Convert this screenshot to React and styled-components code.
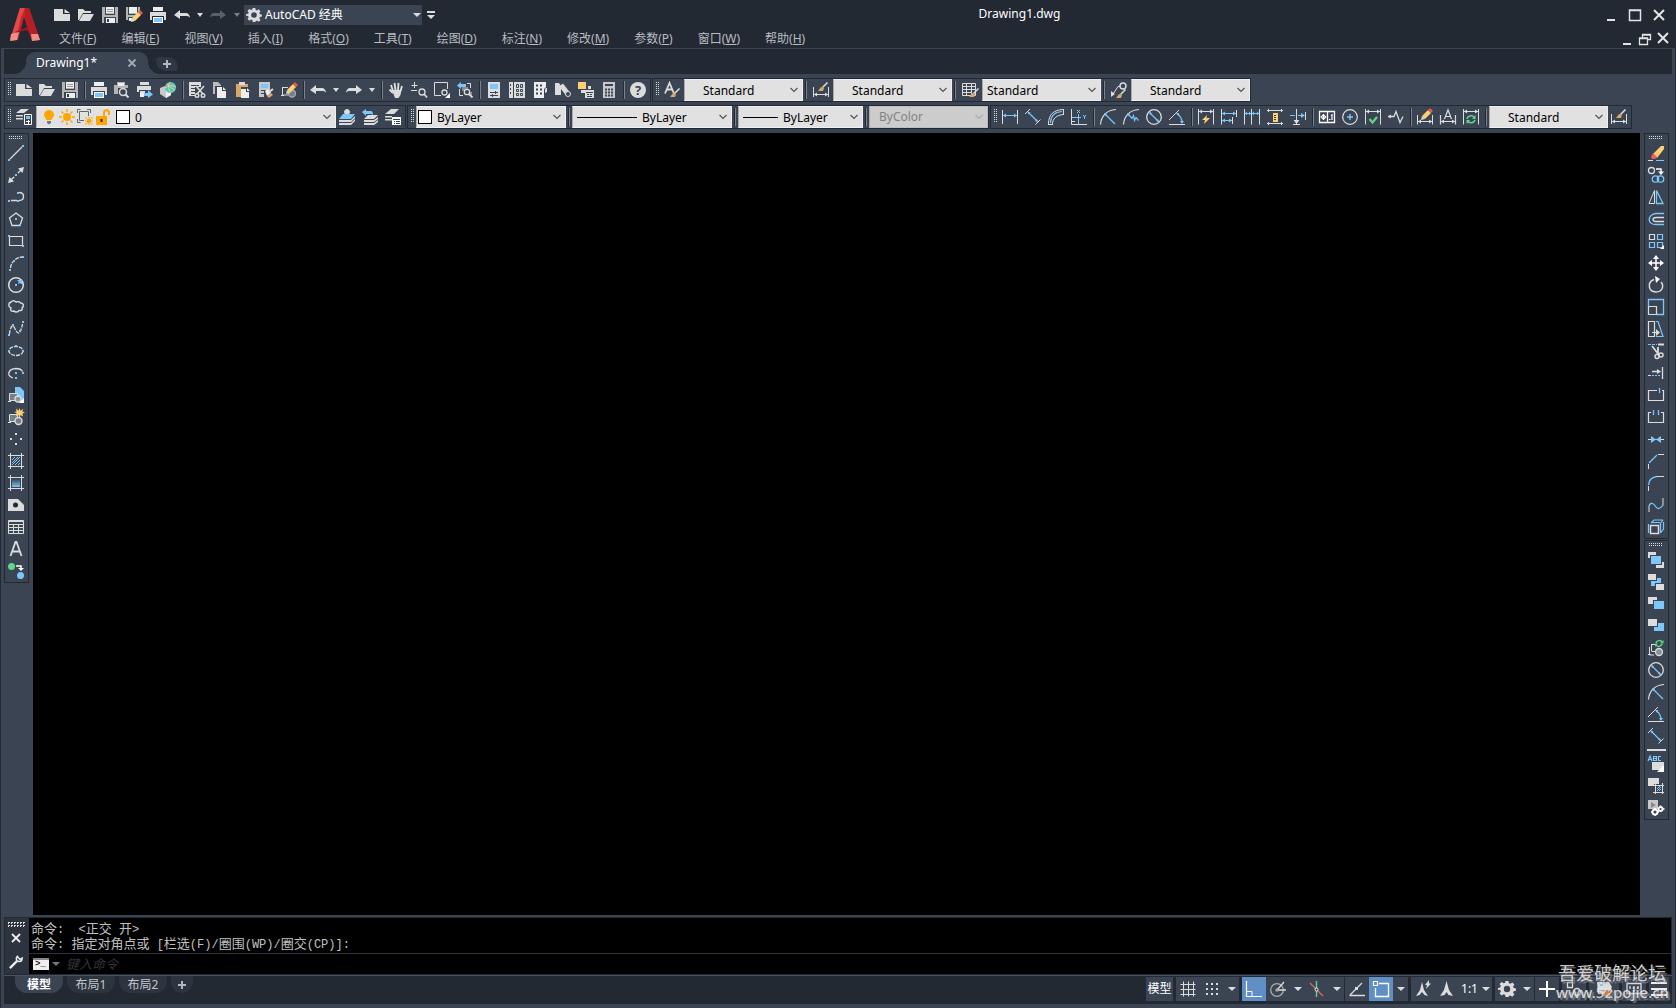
import React from "react";
import styled, { createGlobalStyle, css } from "styled-components";

const DARK = "#222933";
const MID = "#3b4453";
const W = "#dcdcdc";
const B = "#7cc6fb";
const G = "#5fd68a";
const Y = "#ffcf70";
const O = "#ffa500";

const Global = createGlobalStyle`
  * { box-sizing: border-box; }
  body { margin: 0; background: ${DARK}; }
  button, input, select { font: inherit; color: inherit; margin: 0; }
  body { font: 12px/16px "Noto Sans", "Noto Sans CJK SC", sans-serif; color: #fff; }
`;

/* ---------- drawing helpers ---------- */
const S = ({ d, c = W, w = 1, dash }) => (
  <path d={d} fill="none" stroke={c} strokeWidth={w} strokeDasharray={dash} />
);
const F = ({ d, c = W }) => <path d={d} fill={c} fillRule="evenodd" />;
const C = ({ x, y, r, c = W, f = "none", w = 1 }) => (
  <circle cx={x} cy={y} r={r} stroke={c} fill={f} strokeWidth={w} />
);
const Pencil = () => (
  <>
    <F d="M6 11l6-6 3 3-6 6z" c={Y} />
    <F d="M6 11l3 3-4 1z" />
    <F d="M12 5l2-2 3 3-2 2z" c="#e8594f" />
  </>
);
const Brush = ({ x = 0, y = 0 }) => (
  <g transform={`translate(${x} ${y})`}>
    <S d="M15.500 3.500l-5 5" w={1.6} />
    <F d="M6 12l3-4 3 1-1 3z" c="#d9a866" />
  </g>
);

const ICONS = {
  fresh: <><F d="M0 2h9v5h7v7H0z" /><F d="M10.500 2l5.500 4h-5.500z" /></>,
  open: <><F d="M0 2h5l2 2h6v2H5l-4 7H0z" /><F d="M5 7h11l-4 7H1z" /></>,
  save: <><F d="M0 0h16v16H0z" c="#b4b4b4" /><F d="M3 0h10v6H3z" c="#eee" /><F d="M3 0h1v7h8V0h1v8H3zM2 10h12v6H2z" c={MID} /><F d="M5 2h6v1H5zM5 4h6v1H5z" c="#999" /><F d="M4 11h9v5H4z" c="#eee" /><F d="M5 12h2v3H5z" c={MID} /></>,
  saveas: <><F d="M0 0h14v6L8 13H0z" c="#b4b4b4" /><F d="M3 0h8v6H3z" c="#eee" /><F d="M2 0h1v7h8V0h1v8H2zM2 10h5v4H2z" c={MID} /><F d="M3 11h3v3H3z" c="#eee" /><Pencil /></>,
  print: <><F d="M3 0h10v4H3z" c="#eee" /><F d="M0 5h16v8h-2V9H2v4H0z" /><F d="M3 10h10v6H3z" c="#fff" /><F d="M4 11h8v4H4z" c={B} /></>,
  preview: <><F d="M0 5V3h3V0h8v3h3v3H4v6H0z" c="#b4b4b4" /><F d="M4 1h6v3H4z" c="#eee" /><C x={9} y={10} r={3.500} w={1.500} f={MID} /><S d="M11.500 12.500l3 3" w={2} /></>,
  publish: <><F d="M3 0h9v3H3zM0 4h14v4H2v2H0zM3 9h5v2H3z" /><F d="M3 11h4v4H3z" c="#eee" /><F d="M7 11h4V8l5 4.500-5 3.500v-2H7z" c={B} /></>,
  globe: <><F d="M0 6l5-2 6 3v6l-5 3-6-4z" c="#c8c8c8" /><F d="M6 9l5-2v6l-5 3z" c="#f0f0f0" /><circle cx="10.500" cy="5.500" r="5.500" fill="#53c7c9" /><S d="M5 6c4-3 7-3 11-1M10 0c-3 4-1 8 1 11M7 2c3 3 6 5 8 6" c={Y} /></>,
  cut: <><F d="M0 0h12v5H0z" /><F d="M0 5h6v9H0z" /><S d="M2 3.500h8M2 6.500h5M2 9.500h4M2 12.500h4" c={MID} /><S d="M7 4l7 8M15 4l-7 8" w={1.600} /><C x={8} y={13.500} r={1.800} w={1.400} /><C x={14} y={13.500} r={1.800} w={1.400} /></>,
  copy: <><F d="M1 0h5l3 3v1H3v8H1z" c="#bcbcbc" /><F d="M5 5h5v4h4v7H5z" c="#eee" /><F d="M11 5l3 3h-3z" c="#eee" /></>,
  paste: <><F d="M1 2h12v3H6v10H1z" c="#d9a866" /><F d="M4 0h6v3H4z" /><F d="M6 7h5v3h3v6H6z" c="#eee" /><F d="M12 6l3 3h-3z" c="#eee" /></>,
  match: <><F d="M1 0h11v9H6v6H1z" c="#c8c8c8" /><F d="M3 2h7v4H3z" c={B} /><S d="M3 8.500h5M3 11.500h3" c={MID} /><F d="M7 9l3-2 3 4-4 3z" c="#eee" /><F d="M9 14l4-3 2 2-4 3z" c="#d9a866" /><S d="M11 10l4-3" w={2} /></>,
  blockedit: <><S d="M1.500 5v8h6M1 5.500h6M0 13.500h3" /><C x={11} y={11.500} r={3.500} c="#aaa" w={1.300} f="#777f8b" /><g transform="translate(0 -3)"><Pencil /></g></>,
  undo: <F d="M0 8l6-5v3h6c2 0 4 2 4 5-1-2-3-2-4-2H6v3z" />,
  redo: <F d="M16 8l-6-5v3H4c-2 0-4 2-4 5 1-2 3-2 4-2h6v3z" />,
  redoOff: <F d="M16 8l-6-5v3H4c-2 0-4 2-4 5 1-2 3-2 4-2h6v3z" c="#59606b" />,
  pan: <><S d="M5 9L3 3M7.500 8L6.500 1M10 8l.5-7M12.500 9L14 4M5 11L1.500 7.500" w={1.900} /><F d="M4 8h9.500l-1 5-2 3H7z" /></>,
  zoomrt: <><S d="M3.500 0v6M.5 3.500h6M0 8.500h6" /><C x={11} y={10} r={3} w={1.300} /><S d="M13 12l3 3.500" w={1.800} /></>,
  zoomwin: <><S d="M7 13.500H.5v-13h13V7" /><C x={10.500} y={10.500} r={2.500} w={1.300} /><F d="M16 11v5h-5z" c="#fff" /></>,
  zoomprev: <><S d="M2.500 7v6.500H6M10 1.500h3.500V6M14 10v3" /><F d="M5 5h6v4H5z" c="#888" /><F d="M0 3.500L4 0v2h5v3H4v2z" c={B} /><C x={10} y={10} r={2.700} w={1.300} f={MID} /><S d="M12 12l3.500 3.500" w={1.800} /></>,
  props: <><F d="M2 0h12v16H2z" /><F d="M4 2h8v5H4z" c={B} /><S d="M4 10.500h8M4 13.500h8M9.500 9v3M6.500 12v3" c={MID} /></>,
  dcenter: <><F d="M0 0h4v16H0zM5 0h11v16H5z" /><S d="M1.500 2v2M1.500 6v2M1.500 10v2M7.500 2.500h2v3h-2zM11.500 2.500h2v3h-2zM7.500 7.500h2v2h-2zM11.500 7.500h2v2h-2zM7.500 11.500h2v2h-2zM11.500 11.500h2v2h-2z" c={MID} /></>,
  palettes: <><F d="M2 0h12v5l-2 2v9H2z" c="#eee" /><S d="M4 3.500h2M8 3.500h2M4 7.500h2M8 7.500h2M4 11.500h2M8 11.500h2" c={MID} w={2} /><F d="M14 6h1v4l-2 1V7z" /></>,
  sheet: <><F d="M0 1h4l2 3v9H0z" /><S d="M6 3l7 9" w={5} /><C x={13} y={12} r={2.500} f={MID} /></>,
  markup: <><F d="M0 0h8v7H0z" c={Y} /><F d="M10 4h3v3h-3zM3 8h4v3H3zM7 8h9v8H7z" /><S d="M8 10.500h7M9 12.500h2M12 12.500h2M9 14.500h5" c={MID} /></>,
  calc: <><F d="M2 0h12v16H2z" c="#c8c8c8" /><F d="M4 2h8v2H4z" c={MID} /><S d="M4 7.500h2M7 7.500h2M10 7.500h2M4 10.500h2M7 10.500h2M10 10.500h2M4 13.500h2M7 13.500h2M10 13.500h2" c={MID} w={2} /></>,
  textstyle: <><S d="M1 11.500L5.500 1 10 11.500M2.500 7.500h6" w={1.800} /><Brush y={3} /></>,
  dimstyle: <><S d="M.5 5v10M15.500 5v10M1 12.500h14" /><F d="M1 12.500l3-2v4zM15 12.500l-3-2v4z" /><Brush x={-1} y={-3} /></>,
  tablestyle: <><S d="M.5 1.500h13v12H.5zM0 4.500h14M0 7.500h14M0 10.500h10M4.500 2v12M9.500 2v10" /><Brush x={1} y={3} /></>,
  mlstyle: <><S d="M1.500 13L7 4.500h2" /><F d="M0 15V9l4 3z" /><C x={12} y={4} r={3} w={1.400} /><Brush x={-1} y={4} /></>,
  layers: <><F d="M5 0h8L8 4H0zM0 6h7v1.500H0zM0 9h7v1.500H0z" /><S d="M8.500 5.500h7v10h-7z" c="#fff" /><F d="M10 7h4v3h-4z" c={B} /><S d="M10 12.500h4M12.500 11v4" c="#fff" /></>,
  laycur: <><C x={8} y={3} r={2.500} f={W} /><F d="M4 5h12l-4 5H0z" c={B} /><F d="M0 11h12l4-4v2l-4 4H0zM0 14h12l4-4v2l-4 4H0z" /></>,
  layprev: <><F d="M6 6h10l-4 4H2zM2 11h10l4-3v2l-4 3H2zM2 14h10l4-3v2l-4 3H2z" /><F d="M0 3l4-3v2h4c3 0 3 2 3 4-1-1-2-1-3-1H4v2z" c={B} /></>,
  laystate: <><F d="M6 0h8L9 5H0zM0 7h7v1.500H0zM0 10h7v1.500H0z" /><F d="M7 8h9v8H7z" c="#fff" /><S d="M8 10.500h7M9 12.500h1M11 12.500h4M9 14.500h1M11 14.500h4" c={MID} /></>,
  dlinear: <><S d="M.5 1v14M15.500 1v14" /><S d="M1 6.500h14" c={B} /><F d="M1 6.500l3-2v4zM15 6.500l-3-2v4z" c={B} /></>,
  daligned: <><S d="M0 5l5-5M10.500 15.500l5-5" /><S d="M3 3l9.500 9.500" c={B} w={1.200} /><F d="M2.500 2.500l3 1-2 2zM13 13l-3-1 2-2z" c={B} /></>,
  darc: <><S d="M0 15.500h5M15.500 0v6" /><S d="M2.500 14C2.500 7 7 3 14 2.500" c={B} w={1.200} /><S d="M4.500 15c0-5 4-9 11-9.500M.5 15C.5 5 6 1 15 .5" /></>,
  dord: <><S d="M.5 0v15.500h15.500M0 12.500h4" /><S d="M6 1l3 3M9 1L6 4M1 8.500h9M7.500 5v10M12 6l1.500 2L15 6M13.500 8v2" c={B} /></>,
  dradius: <><S d="M.5 15.500C1 8 6 1 16 .5" w={1.200} /><S d="M5 5l10 10" c={B} w={1.300} /><F d="M4 4l3 1-2 2z" c={B} /></>,
  djog: <><S d="M.5 15.500C1 8 6 1 16 .5" w={1.200} /><S d="M5 5l4 4.500 1.500-3 1 5 1.500-3 2.500 3" c={B} w={1.200} /><F d="M4 4l3 1-2 2z" c={B} /></>,
  ddia: <><C x={8} y={8} r={7.300} w={1.300} /><S d="M3.500 3.500l9 9" c={B} w={1.300} /><F d="M3 3l3 1-2 2zM13 13l-3-1 2-2z" c={B} /></>,
  dang: <><S d="M0 15.500h16M0 11L10 1" /><S d="M8 5c4 2 5 6 5 9" c={B} w={1.300} /><F d="M7 4h3v3zM13 15l-2-3h4z" c={B} /></>,
  dquick: <><S d="M.5 0v15.500M15.500 0v15.500M1 2.500h14" /><F d="M1 2.500l3-2v4zM15 2.500l-3-2v4z" /><F d="M9 6L4 11h3l-1 4 6-6H8.500z" c={Y} /></>,
  dbase: <><S d="M.5 0v15.500M11.500 8v7M15.500 1v7" /><S d="M1 4.500h14M1 11.500h10" c={B} /><F d="M1 4.500l3-2v4zM15 4.500l-3-2v4zM1 11.500l3-2v4zM11 11.500l-3-2v4z" c={B} /></>,
  dcont: <><S d="M.5 0v15.500M7.500 0v15.500M15.500 0v15.500" /><S d="M1 4.500h6M8 4.500h7" c={B} /><F d="M1 4.500l2-2v4zM7 4.500l-2-2v4zM8 4.500l2-2v4zM15 4.500l-2-2v4z" c={B} /></>,
  dspace: <><S d="M0 1.500h16M0 14.500h16M1.500 0v3M14.500 0v3M1.500 13v3M14.500 13v3" /><F d="M6 4h5v9H6z" c={Y} /><S d="M7 6.500h2M7 8.500h2M7 10.500h2" c={MID} /></>,
  dbreak: <><S d="M6.500 0v15M3 15.500h7M15.500 3v8" /><S d="M0 6.500h5M8 6.500h6" c={B} w={1.200} /><F d="M6.500 15l-3-4h6z" /><F d="M11 4l4 2.500L11 9z" c={B} /></>,
  tol: <><S d="M.5 2.500h15v11H.5zM8.500 2v12" w={1.300} c="#fff" /><C x={4.500} y={8} r={2} c="#fff" /><S d="M1.500 8h6M4.500 5v6M13 5v6M12 6.500l1-1M10 10.500h1.500" c="#fff" w={1.200} /></>,
  cmark: <><C x={8} y={8} r={7.300} w={1.200} /><S d="M8 5v6M5 8h6" c={B} w={1.400} /></>,
  inspect: <><S d="M.5 0v15.500M15.500 0v15.500M1 2.500h14" /><F d="M1 2.500l3-2v4zM15 2.500l-3-2v4z" /><S d="M4.500 10l3 3.500L12 8" c={G} w={2.200} /></>,
  jogline: <><S d="M0 7.500h6l2-5 4 11 3-6" w={1.300} /><F d="M0 7.500l3-2v4z" /></>,
  dimedit: <><S d="M.5 6v9.500M15.500 6v9.500M1 12.500h14" /><F d="M1 12.500l3-2v4zM15 12.500l-3-2v4z" /><g transform="translate(-1 -4)"><Pencil /></g></>,
  dimtedit: <><S d="M.5 6v9.500M15.500 6v9.500M1 12.500h14M4.500 10L8 1l3.500 9M5.500 7.500h5" w={1.200} /><F d="M1 12.500l3-2v4zM15 12.500l-3-2v4z" /></>,
  dimup: <><S d="M.5 0v15.500M15.500 0v15.500M1 2.500h14" /><F d="M1 2.500l3-2v4zM15 2.500l-3-2v4z" /><S d="M4 10c1-4 6-4 7-1.500M12 11c-1 3.500-6 3.500-7.500 1" c={G} w={1.500} /><F d="M12.500 6v4H9zM3.500 15v-4H7z" c={G} /></>,
  line: <><S d="M2 14L14 2" w={1.200} /><F d="M0 14h2v2H0zM14 0h2v2h-2z" c={B} /></>,
  xline: <><S d="M2 14L14 2" w={1.300} /><F d="M0 16l1.500-6L6 14.500zM16 0l-1.500 6L10 1.500z" /><F d="M6 6h4v4H6z" c={MID} /><F d="M7 7h2v2H7z" c={B} /></>,
  pline: <><S d="M3 11.500h6M11 3.500c6 0 6 8 0 8" w={1.300} /><F d="M0 11h2v2H0zM9 11h2v2H9zM9 3h2v2H9z" c={B} /></>,
  polygon: <><S d="M8 2l6.500 5-2.500 7.500H4L1.500 7z" w={1.300} /><F d="M7 7h2v2H7zM11 13h2v2h-2z" c={B} /></>,
  rect: <><S d="M1.500 3.500h13v9h-13z" w={1.200} /><F d="M0 2h2v2H0zM14 12h2v2h-2z" c={B} /></>,
  arc: <><S d="M2.500 13C3 7 8 2.500 14 2" w={1.300} dash="4 1" /><F d="M1 14h2v2H1zM5 5h2v2H5zM14 1h2v2h-2z" c={B} /></>,
  circle: <><C x={8} y={8} r={7.300} w={1.500} /><F d="M7 7h2v2H7zM9 3h5v4h-1l-1-1-2 1V6l1-1z" c={B} /></>,
  cloud: <path d="M3 3c2-2 4-1 5 0 2-1 4 0 4.500 1 3 0 4 3 1.500 5 1 2-1 3-3 2.500-1 2-4 2-5 .5-3 1-4-1-3-3C0 8 0 4 3 3z" fill="none" stroke={W} strokeWidth="1.400" />,
  spline: <><S d="M1.500 13C2 7 4 3 6 6c2 4 4 8 6 5 1-2 2-5 2.500-8" w={1.300} dash="4 1" /><F d="M0 13h2v2H0zM4 3h2v2H4zM11 9h2v2h-2zM14 0h2v2h-2z" c={B} /></>,
  ellipse: <><ellipse cx="8" cy="8" rx="7" ry="4.500" fill="none" stroke={W} strokeWidth="1.300" strokeDasharray="4 1" /><F d="M7 2h2v2H7zM0 7h2v2H0zM14 7h2v2h-2z" c={B} /></>,
  earc: <><S d="M5 13C-2 11 0 4 8 3.500c4 0 6 2 6.500 3" w={1.300} /><F d="M7 12h2v2H7zM7 7h2v2H7zM14 7h2v2h-2z" c={B} /></>,
  insblock: <><F d="M7 0h5l4 4v12h-3l-3-6H7z" c={B} /><S d="M1.500 6.500h8v7h-8zM0 14.500h3" /><F d="M2 7h7v6H2z" c="#777f8b" /><C x={10} y={12} r={3} w={1.300} f="#88919c" /><F d="M16 11v5h-5z" c="#fff" /></>,
  mkblock: <><S d="M1.500 5.500h8v7h-8zM0 13.500h3" /><F d="M2 6h7v6H2z" c="#777f8b" /><C x={10.500} y={12} r={3.500} w={1.400} f="#777f8b" /><F d="M11.500-1l1.200 3L15-.2l-.5 3 2.500.7-2.500 1 .5 3-2.300-1.500L11.500 9l-1-3L8 7l.5-3L6 3l2.500-.5L8-.5l2.500 2.300z" c={Y} /></>,
  point: <F d="M7 2h2v2H7zM2 7h2v2H2zM12 7h2v2h-2zM7 12h2v2H7z" />,
  hatch: <><S d="M2.500 0v16M13.500 0v16M0 2.500h16M0 13.500h16" /><S d="M4 7l3-3M4 10l6-6M4 12l8-8M7 12l5-5M10 12l2-2" c={B} /></>,
  grad: <><defs><linearGradient id="gr" x1="0" y1="0" x2="0" y2="1"><stop offset="0" stopColor={MID} /><stop offset="1" stopColor={B} /></linearGradient></defs><S d="M2.500 0v16M13.500 0v16M0 2.500h16M0 13.500h16" /><path d="M4 4h8v8H4z" fill="url(#gr)" /></>,
  region: <><F d="M0 2h10l6 6v6H0z" /><circle cx="7.500" cy="8" r="2.500" fill={DARK} /></>,
  table: <><S d="M.5 1.500h15v13H.5zM0 5.500h16M0 8.500h16M0 11.500h16M5.500 5v9M10.500 5v9" /><F d="M1 2h14v1H1z" /></>,
  mtext: <S d="M2.500 15L7.500 1h1l5 14M4 10.500h8" w={1.800} />,
  addsel: <><circle cx="3.500" cy="3.500" r="3.500" fill={G} /><circle cx="12.500" cy="12.500" r="3.500" fill={B} /><S d="M8 3h5v3" w={1.500} c="#fff" /><F d="M10 5h6l-3 3z" c="#fff" /></>,
  erase: <><S d="M0 15.500h5" /><S d="M8 15.500h8" c={B} /><F d="M5 9l8-8h3v3l-7 9z" c={Y} /><F d="M5 8l4 4-2 2H4L3 12z" c="#ef5c5c" /></>,
  dup: <><C x={3.500} y={3.500} r={3} w={1.300} /><C x={7.500} y={12} r={3.200} w={1.300} c={B} /><C x={12.500} y={12} r={3.200} w={1.300} c={B} /><S d="M8 2h5v3" w={1.400} c="#fff" /><F d="M10 4.500h6l-3 3.500z" c="#fff" /></>,
  mirror: <><S d="M6.500 1.500v13H1z" /><S d="M8.500 1.500v13H15z" c={B} w={1.300} /></>,
  offset: <><S d="M16 2.500H8c-9 1-9 11 0 11h8" c={B} w={1.400} /><S d="M16 6.500H8c-4 0-4 4 0 4h8" w={1.300} /></>,
  array: <><S d="M1.500 1.500h5v5h-5z" w={1.200} /><S d="M9.500 1.500h5v5h-5zM1.500 9.500h5v5h-5zM9.500 9.500h5v5h-5z" c={B} w={1.200} /><F d="M16 12v4h-4z" c="#fff" /></>,
  move: <><S d="M8 2v12M2 8h12" w={1.500} c="#fff" /><F d="M8 0l3 4H5zM8 16l3-4H5zM0 8l4-3v6zM16 8l-4-3v6z" c="#fff" /></>,
  rotate: <><S d="M6 2.500C-1 5 0 15 8 15c7 0 8-7 5-10" w={1.500} /><F d="M7-1l5 3-4 4z" c="#fff" /></>,
  scale: <><S d="M.5 7V.5h15v15H9" c={B} w={1.300} /><S d="M.5 7.500h8v8h-8z" w={1.200} /></>,
  stretch: <><S d="M.5 .5h6v15h-6z" w={1.200} /><S d="M8 .5h2l5 15H8" c={B} w={1.200} /><F d="M4 11h4V8l4 3.500L8 15v-3H4z" /></>,
  trim: <><S d="M0 1.500h9" c={B} dash="3 1" /><S d="M10 1.500h6M4 3l7 9M10 4v8" w={1.800} /><C x={9} y={13.500} r={2} w={1.500} /><C x={13} y={12} r={2} w={1.500} /></>,
  extend: <><S d="M14.500 2v12M4 6.500h6" w={1.300} /><F d="M9 4l4 2.500L9 9z" /><S d="M0 10.500h3" /><S d="M4 10.500h9" c={B} dash="2 1" /></>,
  brkpt: <><S d="M9 3.500H.5v10h15v-10H14" w={1.200} /><S d="M11.500 1v5" c={B} w={1.300} /></>,
  brk: <><S d="M3 3.500H.5v10h15v-10H13" w={1.200} /><S d="M5.500 1v5M10.500 1v5" c={B} w={1.300} /></>,
  join: <><S d="M0 8.500h16" /><F d="M3 5l5 3.500L3 12zM13 5L8 8.500l5 3.500z" c={B} /></>,
  chamfer: <><S d="M10 1.500h6M.5 11v5" /><S d="M1 10l8-8" c={B} w={1.300} /></>,
  fillet: <><S d="M9 1.500h7M.5 11v5" /><S d="M.5 10C1 5 4 2 9 1.500" c={B} w={1.300} /></>,
  blend: <><S d="M1 15V9M15 1v7" c="#aaa" w={1.500} /><S d="M1 9c2-5 5-2 7 1s5 1 7-2" c={B} w={1.300} /></>,
  explode: <><S d="M2.500 6.500h8v8h-8z" w={1.500} /><S d="M.5 14V5M3 4l3-3h9M12 5l3-4M15.500 3v7l-3 4M4 3.500h8M12.500 5v9" c={B} w={1.200} /></>,
  front: <><F d="M0 0h8v6H0zM8 10h8v6H8z" /><F d="M2 3h12v10H2z" c={MID} /><F d="M3 4h10v8H3z" c={B} /></>,
  back: <><F d="M3 4h10v8H3z" c={B} /><F d="M0 0h9v7H0zM7 9h9v7H7z" c={MID} /><F d="M0 0h8v6H0zM8 10h8v6H8z" /></>,
  above: <><F d="M0 1h9v7H0z" /><F d="M5 4h11v9H5z" c={MID} /><F d="M6 5h10v8H6z" c={B} /></>,
  under: <><F d="M6 5h10v8H6z" c={B} /><F d="M0 1h10v8H0z" c={MID} /><F d="M0 1h9v7H0z" /></>,
  hatchback: <><S d="M3.500 4v7M3 4.500h4M1.500 7v8H6M0 14.500h3M3.500 11.500h4" /><C x={11} y={12} r={3.500} f="#88919c" w={1.300} /><S d="M8 3c1-3 5-3 6-1M14 4c-1 3-5 3-6 1" c={G} w={1.500} /><F d="M15.500 0v3.500H12zM7 7V3.500h3z" c={G} /></>,
  textfront: <><S d="M0 5l2-5 2 5M.8 3.500h2.500M5.500 0v5M5.500 .5h3v4h-3M6 2.500h2M13 .5h-2.500v4H13" c={B} w={1.200} /><F d="M4 6h12v8H4z" /><F d="M16 9v7h-7z" c="#fff" /></>,
  hatchfront: <><F d="M0 0h11v8H0z" /><F d="M6 6h10v10H6z" c={MID} /><S d="M7.500 5v11M14.500 5v11M5 7.500h11M5 14.500h11" /><S d="M9 11l3-3M9 13l4-4M11 13l2-2" c={B} /></>,
  leadfront: <><F d="M0 0h10v9H0z" c="#c8c8c8" /><F d="M3 2l5 3-5 3z" c="#888" /><C x={7} y={12} r={2.500} c="#fff" w={2} f={MID} /><C x={12.500} y={9} r={2} c="#fff" w={1.800} f={MID} /><S d="M7 8v2M7 14v2M3 12h2M9 12h2M12.500 5.500v2M15 9h1.500" c="#fff" w={1.500} /></>,
  wrench: <><S d="M1 15l8-8" w={2.600} c="#eee" /><S d="M9.500 1.500C7 4 9 8 12 7.500c2 0 3-2 3-4L12.500 5 11 3.500z" w={1.700} c="#eee" /></>,
  grid: <S d="M.5 3.500h15M.5 8.500h15M.5 13.500h15M3.500 .5v15M8.500 .5v15M13.500 .5v15" />,
  snap: <F d="M2 2h2v2H2zM7 2h2v2H7zM12 2h2v2h-2zM2 7h2v2H2zM7 7h2v2H7zM12 7h2v2h-2zM2 12h2v2H2zM7 12h2v2H7zM12 12h2v2h-2z" />,
  ortho: <><S d="M.5 0v15.500H16" c="#fff" w={1.200} /><S d="M1 10.500h5V15" c="#fff" /></>,
  polar: <><C x={7} y={9} r={6.300} c="#aaa" w={1.300} /><S d="M7 9h9M7 9l7-8" w={1.300} /><F d="M5.500 7.500h3v3h-3z" c="#aaa" /></>,
  iso: <><S d="M1 2l13 13" c="#e06666" w={1.200} /><S d="M7.500 0v16" c={G} w={1.400} /><C x={7.500} y={8.500} r={1.500} c="#fff" f={DARK} /></>,
  track: <><S d="M.5 14.500h15.500M1 14L13 2" w={1.300} /><F d="M6 6h3v3H6z" /></>,
  osnap: <><S d="M6 2.500h9.500v13h-13V7" c="#fff" w={1.300} /><S d="M.5 .5h4v4h-4z" c="#fff" w={1.200} /></>,
  annovis: <><F d="M7 1l2 8 4 6-3.500-1-2.500-3-2.500 3L1 15l4-6z" /><F d="M14-1l-4 5h2l-1 4 5-5.500h-2z" /></>,
  anno: <F d="M7.500 0l2.500 9 4 6-4.500-1-2-3-2 3L1 15l4-6z" />,
  plus: <S d="M8 0v16M0 8h16" c="#fff" w={2} />,
  units: <><S d="M1.500 1.500h5v5h-5z" w={1.300} /><C x={11} y={11} r={3.500} w={1.300} /></>,
  perf: <><F d="M1 1h12l3 5-4 7H2z" /><F d="M11 8l4 7H7z" c="#e07b3c" /><F d="M4 3h3v2H4z" c={B} /></>,
  screen: <S d="M1 2.500h14v10H1zM4 5v3M8 5v6M12 5v3" w={1.300} />,
  burger: <S d="M0 2h16M0 8h16M0 14h16" c="#eee" w={2} />,
};

const Svg = styled.svg`
  display: block;
  flex: none;
  width: ${(p) => p.$size || 16}px;
  height: ${(p) => p.$size || 16}px;
  overflow: visible;
`;
const GEAR = "M6.500 0h3l.4 2.200 1.500.6 1.900-1.300 2.100 2.100-1.300 1.900.6 1.500 2.300.4v2.400l-2.300.4-.6 1.500 1.300 1.900-2.100 2.100-1.900-1.300-1.500.6L9.500 16h-3l-.4-2.200-1.500-.6-1.900 1.300L.6 12.400l1.300-1.900-.6-1.500L-1 8.800V6.900l2.300-.4L1.900 5 .6 3.100 2.700 1l1.900 1.300 1.500-.6zM8 4.800a3.200 3.200 0 100 6.400 3.200 3.200 0 000-6.400z";
const Icon = ({ n, size }) => (
  <Svg viewBox="0 0 16 16" $size={size} aria-hidden="true">
    {n === "gear" ? <F d={GEAR} /> : ICONS[n]}
  </Svg>
);

/* ---------- shared controls ---------- */
const Button = styled.button`
  display: flex;
  align-items: center;
  justify-content: center;
  flex: none;
  border: 0;
  padding: 0;
  background: transparent;
  color: ${W};
  width: ${(p) => p.$w || 24}px;
  height: 24px;
`;
const ToolButton = styled(Button)`
  width: ${(p) => p.$w || 23}px;
  height: 22px;
  padding-right: 1px;
`;
const Caret = styled.span`
  border: ${(p) => (p.$small ? 3 : 4)}px solid transparent;
  border-top: 4px solid ${(p) => p.$c || W};
  border-bottom: 0;
`;
const Help = styled.span`
  display: grid;
  place-items: center;
  width: 16px;
  height: 16px;
  border-radius: 50%;
  background: ${W};
  color: ${MID};
  font-weight: 700;
  font-size: 13px;
`;

/* ---------- title area ---------- */
const Shell = styled.div`
  display: flex;
  flex-direction: column;
  min-height: 100vh;
  background: ${MID};
`;
const Header = styled.header`
  display: flex;
  height: 48px;
  background: ${DARK};
`;
const Logo = styled.div`
  width: 50px;
  padding: 8px 10px;
`;
const HeaderMain = styled.div`
  flex: 1;
  display: flex;
  flex-direction: column;
`;
const TitleRow = styled.div`
  display: flex;
  align-items: center;
  height: 30px;
  padding-right: 5px;
`;
const Workspace = styled.label`
  display: flex;
  align-items: center;
  gap: 4px;
  width: 178px;
  height: 20px;
  padding: 0 1px 0 3px;
  background: ${MID};
`;
const Select = styled.select`
  appearance: none;
  flex: 1;
  min-width: 0;
  height: 100%;
  border: 0;
  padding: 0;
  background: transparent;
  outline: 0;
  opacity: 1;
`;
const Customize = styled.span`
  border-top: 2px solid ${W};
  padding-top: 2px;
`;
const Title = styled.h1`
  flex: 1;
  margin: 0;
  padding-bottom: 2px;
  font-size: 12px;
  line-height: 16px;
  font-weight: 400;
  text-align: center;
`;
const MenuRow = styled.div`
  display: flex;
  justify-content: space-between;
  height: 18px;
  padding-right: 4px;
`;
const Menu = styled.nav`
  display: flex;
  gap: 25px;
  padding-left: 9px;
`;
const MenuLink = styled.a`
  color: #b9bcc1;
  text-decoration: none;
  line-height: 18px;
`;
const WinButtons = styled.div`
  display: flex;
`;

/* ---------- document tabs ---------- */
const Body = styled.div`
  flex: 1;
  display: flex;
  flex-direction: column;
  border: solid ${DARK};
  border-width: 0 1px;
`;
const DocTabs = styled.div`
  display: flex;
  align-items: flex-end;
  gap: 16px;
  height: 25px;
  margin: 1px 3px 4px;
  padding-left: 22px;
  background: ${DARK};
`;
const flare = css`
  content: "";
  position: absolute;
  width: 12px;
  height: 12px;
`;
const DocTab = styled.div`
  position: relative;
  display: flex;
  align-items: center;
  justify-content: space-between;
  width: 122px;
  height: 22px;
  padding: 0 8px 0 10px;
  border-radius: 9px 9px 0 0;
  background: ${MID};
  &::before {
    ${flare}
    left: -12px;
    bottom: 0;
    background: radial-gradient(circle at 0 0, transparent 12px, ${MID} 12px);
  }
  &::after {
    ${flare}
    right: -12px;
    bottom: 0;
    background: radial-gradient(circle at 100% 0, transparent 12px, ${MID} 12px);
  }
`;
const AddDoc = styled(Button)`
  width: 22px;
  height: 14px;
  margin-bottom: 3px;
  margin-left: -8px;
  border-radius: 4px 12px 4px 12px;
  background: #303846;
`;

/* ---------- tool bars ---------- */
const Bars = styled.div`
  display: flex;
  gap: 1px;
  margin: 0 3px 3px;
`;
const Bar = styled.div`
  display: flex;
  flex-direction: ${(p) => (p.$vertical ? "column" : "row")};
  border: 1px solid ${DARK};
`;
const Grip = styled.span`
  flex: none;
  width: ${(p) => (p.$vertical ? 23 : 8)}px;
  height: ${(p) => (p.$vertical ? 8 : 22)}px;
  padding: ${(p) => (p.$vertical ? "2px 6px 2px 3px" : "3px 2px 5px 2px")};
  background: conic-gradient(#d8d8d8 0 25%, transparent 0) 0 0 / 2px 2px content-box content-box;
`;
const Sep = styled.span`
  width: ${(p) => (p.$wide ? 7 : 6)}px;
  margin: 2px 0;
  background: linear-gradient(${DARK}, ${DARK}) 2px 0 / 1px 100% no-repeat,
    linear-gradient(#7b828d, #7b828d) 3px 0 / 1px 100% no-repeat;
`;
const WideSep = styled.span`
  height: 2px;
  margin: 2px;
  background: ${W};
`;
const Combo = styled.label`
  display: flex;
  align-items: center;
  gap: 5px;
  width: ${(p) => p.$w}px;
  height: 22px;
  padding: 0 4px 0 ${(p) => p.$pad}px;
  background: ${(p) => (p.$off ? "#cccccc" : "#e1e1e1")};
  border: 1px solid ${(p) => (p.$off ? "#bdbdbd" : "#f0f0f0")};
  border-left-color: #aaa;
  color: ${(p) => (p.$off ? "#838383" : "#000")};
  select { padding-top: ${(p) => (p.$off ? 0 : 2)}px; }
`;
const Swatch = styled.span`
  width: 14px;
  height: 14px;
  border: 1px solid #000;
  background: #fff;
`;
const Stroke = styled.span`
  width: ${(p) => p.$w}px;
  height: 1px;
  background: #000;
`;
const LayerFlags = styled.span`
  display: flex;
  align-items: center;
  gap: 2px;
`;

const Chevron = ({ c = "#555" }) => (
  <Svg viewBox="0 0 8 8" $size={8} aria-hidden="true"><S d="M.5 2L4 5.500 7.500 2" c={c} w={1.200} /></Svg>
);
const Picker = ({ label, value, w = 119, pad = 18, off, children }) => (
  <Combo $w={w} $pad={pad} $off={off}>
    {children}
    <Select aria-label={label} disabled={off}><option>{value}</option></Select>
    <Chevron c={off ? "#aaa" : undefined} />
  </Combo>
);

const Tools = ({ names }) =>
  names.split(" ").map((n, i) => {
    if (n === "|") return <Sep key={i} />;
    if (n === "_") return <WideSep key={i} />;
    if (n === "v") return <ToolButton key={i} $w={13} aria-label="更多"><Caret $small /></ToolButton>;
    if (n === "?") return <ToolButton key={i} aria-label="帮助"><Help>?</Help></ToolButton>;
    return <ToolButton key={i} aria-label={n}><Icon n={n} /></ToolButton>;
  });

/* ---------- work area ---------- */
const Work = styled.div`
  flex: 1;
  display: flex;
  padding-top: 1px;
`;
const Side = styled.aside`
  display: flex;
  flex-direction: column;
  gap: 1px;
  padding: 0 ${(p) => (p.$right ? 6 : 4)}px 0 ${(p) => (p.$right ? 4 : 3)}px;
`;
const Canvas = styled.main`
  flex: 1;
  background: #000;
`;

/* ---------- command line ---------- */
const Command = styled.section`
  display: flex;
  height: 58px;
  margin: 2px 3px 0;
  border: 1px solid ${DARK};
  background: #000;
`;
const CommandSide = styled.div`
  display: flex;
  flex-direction: column;
  align-items: center;
  gap: 2px;
  width: 24px;
  padding: 4px 4px 4px 2px;
  background: #2d343f;
`;
const DotGrip = styled.span`
  width: 18px;
  height: 6px;
  background: conic-gradient(#ddd 0 25%, transparent 0) 0 0 / 3px 3px;
`;
const SmallButton = styled(Button)`
  width: 18px;
  height: 16px;
  &:last-child { margin-top: auto; }
`;
const CommandMain = styled.div`
  flex: 1;
`;
const History = styled.div`
  height: 36px;
  padding: 2px 2px 0;
  border-bottom: 1px solid #2d343f;
  color: #c0c0c0;
`;
const HistoryLine = styled.div`
  height: 15px;
  white-space: pre;
  font: 13px/16px "Noto Sans CJK SC", sans-serif;
`;
const Latin = styled.span`
  font: 12px/12px "Liberation Mono", monospace;
`;
const Prompt = styled.label`
  display: flex;
  align-items: center;
  height: 20px;
  padding-left: 4px;
`;
const Terminal = styled.span`
  width: 16px;
  height: 12px;
  margin-right: 3px;
  padding-left: 2px;
  border-top: 2px solid #888;
  background: #eee;
  color: #222;
  font: 700 9px/9px "Liberation Mono", monospace;
`;
const Entry = styled.input`
  flex: 1;
  margin-left: 6px;
  border: 0;
  padding: 0;
  outline: 0;
  background: transparent;
  font: italic 13px/18px "Noto Sans CJK SC", sans-serif;
  &::placeholder { color: #343434; opacity: 1; }
`;
const mix = (text) =>
  text.split(/([\x20-\x7e]+)/).map((t, i) => (i % 2 ? <Latin key={i}>{t}</Latin> : t));

/* ---------- status bar ---------- */
const Status = styled.footer`
  display: flex;
  justify-content: space-between;
  height: 29px;
  margin: 0 3px 4px;
  border-top: 1px solid #4a5260;
  background: ${DARK};
`;
const Layouts = styled.div`
  display: flex;
  gap: 4px;
  padding-left: 11px;
`;
const LayoutTab = styled.button`
  height: 17px;
  width: 48px;
  border: 0;
  padding: 0;
  border-radius: 0 0 12px 12px;
  background: ${(p) => (p.$on ? MID : "#2c3440")};
  color: ${(p) => (p.$on ? "#fff" : "#c3c6ca")};
  font-weight: ${(p) => (p.$on ? 700 : 400)};
  line-height: 17px;
`;
const AddLayout = styled(LayoutTab)`
  display: grid;
  place-items: center;
  width: 22px;
`;
const Groups = styled.div`
  display: flex;
  gap: 3px;
  padding: 1px 3px 0 0;
`;
const Pair = styled.div`
  display: flex;
  gap: 1px;
`;
const Group = styled.div`
  display: flex;
  height: 24px;
  background: ${MID};
`;
const StatusButton = styled(Button)`
  background: ${(p) => (p.$on ? "#5f8fc4" : "transparent")};
  color: #fff;
  gap: 4px;
`;
const StatusIcon = ({ n, on, w }) => (
  <StatusButton aria-label={n} aria-pressed={!!on} $on={on} $w={w}><Icon n={n} /></StatusButton>
);
const More = () => <StatusButton $w={15} aria-label="更多"><Caret /></StatusButton>;

/* forum mark that lies over the corner of the window */
const Mark = styled.div`
  position: absolute;
  right: 8px;
  bottom: 6px;
  width: 112px;
  text-align: center;
  white-space: nowrap;
  color: rgba(230, 230, 230, 0.9);
  text-shadow: 2px 2px 1px rgba(150, 150, 150, 0.7);
  font: 18px/20px "Noto Sans CJK SC", sans-serif;
  pointer-events: none;
`;
const MarkUrl = styled.div`
  font: 500 15px/20px "Noto Sans", sans-serif;
`;

const MENUS = [["文件", "F"], ["编辑", "E"], ["视图", "V"], ["插入", "I"], ["格式", "O"], ["工具", "T"], ["绘图", "D"], ["标注", "N"], ["修改", "M"], ["参数", "P"], ["窗口", "W"], ["帮助", "H"]];

const WinIcon = ({ d, w = 2 }) => (
  <Svg viewBox="0 0 12 12" $size={12} aria-hidden="true"><S d={d} w={w} c="#e4e4e4" /></Svg>
);
const PlusIcon = () => (
  <Svg viewBox="0 0 8 8" $size={8} aria-hidden="true"><S d="M4 0v8M0 4h8" c="#b4b8be" w={2} /></Svg>
);
const CROSS = "M1 1l10 10M11 1L1 11";

export default function App() {
  return (
    <Shell>
      <Global />
      <Header>
        <Logo>
          <svg width="30" height="34" viewBox="0 0 30 34" aria-label="AutoCAD">
            <path d="M10 0h9l11 32-8 1L14 9 8 32l-8 1z" fill="#c8242b" />
            <path d="M10 0h5l-4 9-3 14-8 9z" fill="#e04a48" />
            <path d="M5 24l17-7 3 7-10-2-8 3z" fill="#a3161d" />
            <path d="M15 0h4l11 32-8 1-7-22z" fill="#b51e25" />
            <path d="M1 26l8-2-2 8-7 1zM21 26l7 0 2 6-8 1z" fill="#ee8f88" />
          </svg>
        </Logo>
        <HeaderMain>
          <TitleRow>
            <Button aria-label="新建"><Icon n="fresh" /></Button>
            <Button aria-label="打开"><Icon n="open" /></Button>
            <Button aria-label="保存"><Icon n="save" /></Button>
            <Button aria-label="另存为"><Icon n="saveas" /></Button>
            <Button aria-label="打印"><Icon n="print" /></Button>
            <Button aria-label="放弃"><Icon n="undo" /></Button>
            <Button $w={12} aria-label="放弃列表"><Caret $small /></Button>
            <Button aria-label="重做"><Icon n="redoOff" /></Button>
            <Button $w={14} aria-label="重做列表"><Caret $small $c="#7a808a" /></Button>
            <Workspace>
              <Icon n="gear" size={14} />
              <Select aria-label="工作空间"><option>AutoCAD 经典</option></Select>
              <Caret />
            </Workspace>
            <Button $w={18} aria-label="自定义"><Customize><Caret as="div" /></Customize></Button>
            <Title>Drawing1.dwg</Title>
            <WinButtons>
              <Button aria-label="最小化"><WinIcon d="M2 11h8" /></Button>
              <Button aria-label="最大化"><WinIcon w={1.500} d="M.5 1v10.500h11V1zM0 1.500h12" /></Button>
              <Button aria-label="关闭"><WinIcon d={CROSS} /></Button>
            </WinButtons>
          </TitleRow>
          <MenuRow>
            <Menu>
              {MENUS.map(([t, k]) => (
                <MenuLink key={k} href="#">{t}(<u>{k}</u>)</MenuLink>
              ))}
            </Menu>
            <WinButtons>
              <Button $w={18} aria-label="最小化图形"><WinIcon d="M2 8h8" /></Button>
              <Button $w={18} aria-label="还原图形"><WinIcon w={1.300} d="M3.500 2V-1.500h8v5H8M.5 2v6.500h8V2zM3 -1h9M0 2.500h9" /></Button>
              <Button $w={18} aria-label="关闭图形"><WinIcon d="M1-3l10 10M11-3L1 7" /></Button>
            </WinButtons>
          </MenuRow>
        </HeaderMain>
      </Header>

      <Body>
        <DocTabs>
          <DocTab>
            Drawing1*
            <Button $w={16} aria-label="关闭选项卡">
              <Svg viewBox="0 0 8 8" $size={8}><S d="M.5 .5l7 7M7.500 .5l-7 7" c="#a5a9b0" w={1.800} /></Svg>
            </Button>
          </DocTab>
          <AddDoc aria-label="新图形"><PlusIcon /></AddDoc>
        </DocTabs>

        <Bars>
          <Bar>
            <Grip />
            <Tools names="fresh open save | print preview publish globe | cut copy paste match blockedit | undo v redo v | pan zoomrt zoomwin zoomprev | props dcenter palettes sheet markup calc | ?" />
          </Bar>
          <Bar>
            <Grip />
            <Tools names="textstyle" />
            <Picker label="文字样式" value="Standard" />
            <Sep $wide />
            <Tools names="dimstyle" />
            <Picker label="标注样式" value="Standard" />
            <Sep $wide />
            <Tools names="tablestyle" />
            <Picker label="表格样式" value="Standard" pad={4} />
            <Sep $wide />
            <Tools names="mlstyle" />
            <Picker label="多重引线样式" value="Standard" />
          </Bar>
        </Bars>
        <Bars>
          <Bar>
            <Grip />
            <Tools names="layers" />
            <Picker label="图层" value="0" w={300} pad={4}>
              <LayerFlags>
                <Svg viewBox="0 0 16 16"><path d="M8 1a5 5 0 015 5c0 2-2 3-2.500 5h-5C5 9 3 8 3 6a5 5 0 015-5z" fill={O} /><F d="M6 12h4v2l-2 1.500L6 14z" c="#777" /></Svg>
                <Svg viewBox="0 0 16 16"><circle cx="8" cy="8" r="4" fill={O} /><S d="M8 0v3M8 13v3M0 8h3M13 8h3M2.500 2.500l2 2M11.500 11.500l2 2M2.500 13.500l2-2M11.500 4.500l2-2" c={O} w={1.400} /></Svg>
                <Svg viewBox="0 0 16 16"><S d="M2.500 2.500h9v9h-9zM.5 4V.5h3M10 .5h3.500V4M.5 10v3.500h3" c="#666" /><F d="M7 7h9v9H7z" c="#e1e1e1" /><circle cx="12" cy="12" r="2.500" fill={O} /><S d="M12 8v1M12 15v1M8 12h1M15 12h1M9.500 9.500l-1-1M14.500 9.500l1-1M9.500 14.500l-1 1M14.500 14.500l1 1" c={O} w={1.200} /></Svg>
                <Svg viewBox="0 0 16 16"><F d="M1 7h11v9H1z" c={O} /><S d="M9 7V3.500c0-3 5-3 5 0V6" c={O} w={2} /><S d="M6.500 10v3" c="#333" w={2} /></Svg>
              </LayerFlags>
              <Swatch />
            </Picker>
            <Tools names="laycur layprev laystate" />
          </Bar>
          <Bar>
            <Grip />
            <Picker label="颜色" value="ByLayer" w={150} pad={1}><Swatch /></Picker>
            <Sep />
            <Picker label="线型" value="ByLayer" w={160} pad={4}><Stroke $w={60} /></Picker>
            <Sep />
            <Picker label="线宽" value="ByLayer" w={125} pad={4}><Stroke $w={35} /></Picker>
            <Sep />
            <Picker label="打印样式" value="ByColor" pad={9} off />
          </Bar>
          <Bar>
            <Grip />
            <Tools names="dlinear daligned darc dord | dradius djog ddia dang | dquick dbase dcont dspace dbreak | tol cmark inspect jogline | dimedit dimtedit dimup |" />
            <Picker label="当前标注样式" value="Standard" />
            <Tools names="dimstyle" />
          </Bar>
        </Bars>

        <Work>
          <Side>
            <Bar $vertical>
              <Grip $vertical />
              <Tools names="line xline pline polygon rect arc circle cloud spline ellipse earc insblock mkblock point hatch grad region table mtext addsel" />
            </Bar>
          </Side>
          <Canvas />
          <Side $right>
            <Bar $vertical>
              <Grip $vertical />
              <Tools names="erase dup mirror offset array move rotate scale stretch trim extend brkpt brk join chamfer fillet blend explode" />
            </Bar>
            <Bar $vertical>
              <Grip $vertical />
              <Tools names="front back above under hatchback ddia dradius dang daligned _ textfront hatchfront leadfront" />
            </Bar>
          </Side>
        </Work>

        <Command>
          <CommandSide>
            <DotGrip />
            <SmallButton aria-label="关闭命令行">
              <Svg viewBox="0 0 10 10" $size={10}><S d="M1 1l8 8M9 1L1 9" c="#eee" w={1.800} /></Svg>
            </SmallButton>
            <SmallButton aria-label="自定义命令行"><Icon n="wrench" size={14} /></SmallButton>
          </CommandSide>
          <CommandMain>
            <History>
              <HistoryLine>{mix("命令:  <正交 开>")}</HistoryLine>
              <HistoryLine>{mix("命令: 指定对角点或 [栏选(F)/圈围(WP)/圈交(CP)]:")}</HistoryLine>
            </History>
            <Prompt>
              <Terminal>&gt;_</Terminal>
              <Caret $c="#777" />
              <Entry aria-label="命令" placeholder="键入命令" />
            </Prompt>
          </CommandMain>
        </Command>

        <Status>
          <Layouts>
            <LayoutTab $on>模型</LayoutTab>
            <LayoutTab>布局1</LayoutTab>
            <LayoutTab>布局2</LayoutTab>
            <AddLayout aria-label="新建布局"><PlusIcon /></AddLayout>
          </Layouts>
          <Groups>
            <Group><StatusButton $w={27}>模型</StatusButton></Group>
            <Group><StatusIcon n="grid" /><StatusIcon n="snap" /><More /></Group>
            <Pair>
              <Group><StatusIcon n="ortho" on /><StatusIcon n="polar" /><More /><StatusIcon n="iso" /><More /></Group>
              <Group><StatusIcon n="track" /><StatusIcon n="osnap" on /><More /></Group>
            </Pair>
            <Group><StatusIcon n="annovis" /><StatusIcon n="anno" /><StatusButton $w={33}>1:1<Caret /></StatusButton></Group>
            <Pair>
              <Group><StatusIcon n="gear" /><More /></Group>
              <Group><StatusIcon n="plus" /></Group>
            </Pair>
            <Group><StatusIcon n="units" /></Group>
            <Group><StatusIcon n="perf" w={30} /></Group>
            <Group><StatusIcon n="screen" /></Group>
            <Group><StatusIcon n="burger" w={20} /></Group>
          </Groups>
        </Status>
      </Body>
      <Mark>吾爱破解论坛<MarkUrl>www.52pojie.cn</MarkUrl></Mark>
    </Shell>
  );
}
